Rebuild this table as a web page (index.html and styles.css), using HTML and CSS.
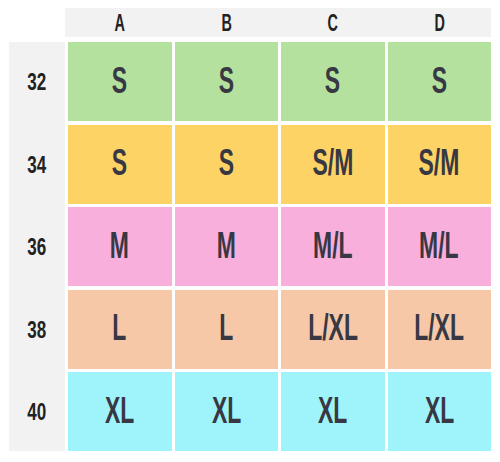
FILE: index.html
```html
<!DOCTYPE html>
<html lang="en">
<head>
    <meta charset="UTF-8">
    <title>Size chart</title>
    <link rel="stylesheet" href="styles.css">
</head>
<body>
    <div class="chart">
        <div class="head">
            <div class="col-label"><span>A</span></div>
            <div class="col-label"><span>B</span></div>
            <div class="col-label"><span>C</span></div>
            <div class="col-label"><span>D</span></div>
        </div>

        <div class="grid">
            <div class="rows">
                <div class="row-label"><span>32</span></div>
                <div class="row-label"><span>34</span></div>
                <div class="row-label"><span>36</span></div>
                <div class="row-label"><span>38</span></div>
                <div class="row-label"><span>40</span></div>
            </div>

            <div class="cell green"><span>S</span></div>
            <div class="cell green"><span>S</span></div>
            <div class="cell green"><span>S</span></div>
            <div class="cell green"><span>S</span></div>

            <div class="cell yellow"><span>S</span></div>
            <div class="cell yellow"><span>S</span></div>
            <div class="cell yellow"><span>S/M</span></div>
            <div class="cell yellow"><span>S/M</span></div>

            <div class="cell pink"><span>M</span></div>
            <div class="cell pink"><span>M</span></div>
            <div class="cell pink"><span>M/L</span></div>
            <div class="cell pink"><span>M/L</span></div>

            <div class="cell peach"><span>L</span></div>
            <div class="cell peach"><span>L</span></div>
            <div class="cell peach"><span>L/XL</span></div>
            <div class="cell peach"><span>L/XL</span></div>

            <div class="cell cyan"><span>XL</span></div>
            <div class="cell cyan"><span>XL</span></div>
            <div class="cell cyan"><span>XL</span></div>
            <div class="cell cyan"><span>XL</span></div>
        </div>
    </div>
</body>
</html>
```

FILE: styles.css
```css
body {
    margin: 0;
    background: #ffffff;
    font-family: "Liberation Sans", Arial, sans-serif;
    color: #383844;
}

.chart {
    width: 482px;
    padding: 8px 0 0 9px;
}

.head {
    margin-left: 56px;
    padding-left: 3px;
    height: 29px;
    margin-bottom: 5px;
    background: #f2f2f2;
    display: grid;
    grid-template-columns: repeat(4, 1fr);
    column-gap: 3px;
}

.col-label {
    display: flex;
    align-items: center;
    justify-content: center;
    font-size: 24px;
    font-weight: bold;
    color: #222;
}

.col-label span {
    display: inline-block;
    transform: scaleX(0.6);
}

.grid {
    display: grid;
    grid-template-columns: 56px repeat(4, 1fr);
    grid-template-rows: repeat(5, 79px);
    column-gap: 3px;
    row-gap: 3.5px;
}

.rows {
    grid-row: 1 / -1;
    background: #f2f2f2;
    display: grid;
    grid-template-rows: repeat(5, 79px);
    row-gap: 3.5px;
}

.row-label {
    display: flex;
    align-items: center;
    justify-content: center;
    padding-top: 2px;
    font-size: 23px;
    font-weight: bold;
    color: #222;
}

.row-label span {
    display: inline-block;
    transform: scaleX(0.74);
}

.cell {
    display: flex;
    align-items: center;
    justify-content: center;
    padding-bottom: 2px;
    font-size: 37px;
    font-weight: bold;
}

.cell span {
    display: inline-block;
    transform: scaleX(0.62);
}

.green { background: #b4e29e; }
.yellow { background: #fed365; }
.pink { background: #f9afdb; }
.peach { background: #f6c8a8; }
.cyan { background: #9ef4fa; }
```
